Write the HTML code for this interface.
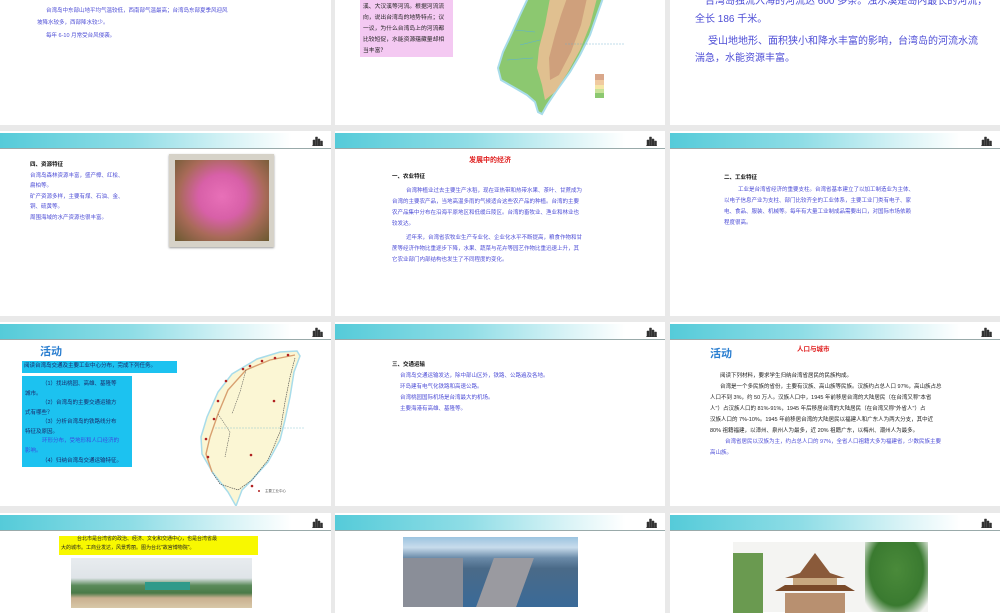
<!DOCTYPE html>
<html><head><meta charset="utf-8">
<style>
*{margin:0;padding:0;box-sizing:border-box}
body{width:1000px;height:600px;overflow:hidden;background:#e9e9e9;position:relative;font-family:"Liberation Sans","Noto Sans CJK SC",sans-serif}
.s{position:absolute;background:#fff;overflow:hidden}
.hd{position:absolute;left:0;right:0;top:2px;height:16px;background:linear-gradient(90deg,#55cbd9 0%,#8fdde6 40%,#d8f3f6 70%,#fff 88%);border-bottom:1px solid #9aa}
.ic{position:absolute;right:8px;top:3px;width:11px;height:10px}
.t{position:absolute;font-size:5.5px;line-height:11px;color:#4d4dd6;white-space:nowrap}
.b{color:#111;font-weight:bold}
.p{position:absolute}
</style></head><body>

<!-- row1 -->
<div class="s" style="left:0;top:-60px;width:331px;height:185px">
 <div class="t" style="left:38px;top:53px">年降水量多在 2000 毫米以上。</div>
 <div class="t" style="left:46px;top:66px">台湾岛中东部山地平均气温较低，西南部气温最高；台湾岛东部夏季风迎风</div>
 <div class="t" style="left:37px;top:78px">坡降水较多，西部降水较少。</div>
 <div class="t" style="left:46px;top:91px">每年 6-10 月常受台风侵袭。</div>
</div>
<div class="s" style="left:335px;top:-60px;width:330px;height:185px">
 <div class="p" style="left:25px;top:40px;width:93px;height:77px;background:#f4c9f2"></div>
 <div class="t" style="left:28px;top:62px;color:#222;font-size:5.8px">溪、大汉溪等河流。根据河流流</div>
 <div class="t" style="left:28px;top:73px;color:#222;font-size:5.8px">向，说出台湾岛的地势特点；议</div>
 <div class="t" style="left:28px;top:84px;color:#222;font-size:5.8px">一议，为什么台湾岛上的河流都</div>
 <div class="t" style="left:28px;top:95px;color:#222;font-size:5.8px">比较短促，水能资源蕴藏量却相</div>
 <div class="t" style="left:28px;top:106px;color:#222;font-size:5.8px">当丰富？</div>
 <svg class="p" style="left:0;top:0" width="330" height="185">
  <path d="M193 58 L268 58 L262 75 L255 95 L245 115 L235 132 L222 150 L212 165 L207 174 L203 172 L200 162 L192 155 L180 148 L166 140 L163 128 L168 112 L176 95 L185 75 Z" fill="#8cc870" stroke="#a8dcea" stroke-width="2"/>
  <path d="M215 58 L262 58 L255 85 L245 110 L233 132 L220 152 L210 160 L207 145 L202 128 L204 108 L210 85 Z" fill="#e0c090"/>
  <path d="M232 58 L252 58 L246 85 L236 112 L224 135 L215 140 L214 118 L220 95 L226 75 Z" fill="#cfa07c"/>
  <path d="M180 90 L200 92 M172 120 L198 118 M185 105 L205 100" stroke="#5ab0d8" stroke-width=".5" fill="none"/>
  <rect x="260" y="134" width="9" height="6" fill="#d9a78a"/><rect x="260" y="140" width="9" height="5" fill="#f0caa0"/><rect x="260" y="145" width="9" height="4" fill="#f5e6a6"/><rect x="260" y="149" width="9" height="4" fill="#c8e298"/><rect x="260" y="153" width="9" height="5" fill="#8cc870"/>
  <line x1="230" y1="104" x2="290" y2="104" stroke="#6ac" stroke-width=".4" stroke-dasharray="2 1"/>
 </svg>
</div>
<div class="s" style="left:670px;top:-60px;width:330px;height:185px">
 <div class="t" style="left:35px;top:55px;font-size:10px;line-height:14px">台湾岛独流入海的河流达 600 多条。浊水溪是岛内最长的河流，</div>
 <div class="t" style="left:25px;top:73px;font-size:10px;line-height:14px">全长 186 千米。</div>
 <div class="t" style="left:38px;top:95px;font-size:10px;line-height:14px">受山地地形、面积狭小和降水丰富的影响，台湾岛的河流水流</div>
 <div class="t" style="left:25px;top:112px;font-size:10px;line-height:14px">湍急，水能资源丰富。</div>
</div>

<!-- row2 -->
<div class="s" style="left:0;top:131px;width:331px;height:185px">
 <div class="hd"><svg class="ic" viewBox="0 0 11 10"><path d="M1 10V4h2v6M3.5 10V1h2v9M6 10V3h2v7M8.5 10V5h2v5M0 9.5h11" fill="#333" stroke="#333" stroke-width=".5"/></svg></div>
 <div class="t b" style="left:30px;top:29px">四、资源特征</div>
 <div class="t" style="left:30px;top:40px">台湾岛森林资源丰富，盛产樟、红桧、</div>
 <div class="t" style="left:30px;top:50px">扁柏等。</div>
 <div class="t" style="left:30px;top:61px">矿产资源多样，主要有煤、石油、金、</div>
 <div class="t" style="left:30px;top:71px">铜、硫黄等。</div>
 <div class="t" style="left:30px;top:82px">周围海域的水产资源也很丰富。</div>
 <div class="p" style="left:169px;top:23px;width:105px;height:93px;background:#d6d2c8;box-shadow:0 1px 2px #999"></div>
 <div class="p" style="left:175px;top:29px;width:94px;height:81px;background:radial-gradient(ellipse at 50% 45%,#e870b8 0%,#d860a8 35%,#a86a58 65%,#6a5a30 100%)"></div>
</div>
<div class="s" style="left:335px;top:131px;width:330px;height:185px">
 <div class="hd"><svg class="ic" viewBox="0 0 11 10"><path d="M1 10V4h2v6M3.5 10V1h2v9M6 10V3h2v7M8.5 10V5h2v5M0 9.5h11" fill="#333" stroke="#333" stroke-width=".5"/></svg></div>
 <div class="t" style="left:134px;top:24px;color:#e02020;font-weight:bold;font-size:7px">发展中的经济</div>
 <div class="t b" style="left:57px;top:41px">一、农业特征</div>
 <div class="t" style="left:71px;top:55px">台湾种植业过去主要生产水稻，现在亚热带和热带水果、茶叶、甘蔗成为</div>
 <div class="t" style="left:57px;top:66px">台湾的主要农产品，当地高温多雨的气候适合这些农产品的种植。台湾的主要</div>
 <div class="t" style="left:57px;top:77px">农产品集中分布在沿海平原地区和低缓丘陵区。台湾的畜牧业、渔业和林业也</div>
 <div class="t" style="left:57px;top:88px">较发达。</div>
 <div class="t" style="left:71px;top:102px">近年来，台湾省农牧业生产专业化、企业化水平不断提高，粮食作物和甘</div>
 <div class="t" style="left:57px;top:113px">蔗等经济作物比重逐步下降，水果、蔬菜与花卉等园艺作物比重迅速上升，其</div>
 <div class="t" style="left:57px;top:124px">它农业部门内部结构也发生了不同程度的变化。</div>
</div>
<div class="s" style="left:670px;top:131px;width:330px;height:185px">
 <div class="hd"><svg class="ic" viewBox="0 0 11 10"><path d="M1 10V4h2v6M3.5 10V1h2v9M6 10V3h2v7M8.5 10V5h2v5M0 9.5h11" fill="#333" stroke="#333" stroke-width=".5"/></svg></div>
 <div class="t b" style="left:54px;top:42px">二、工业特征</div>
 <div class="t" style="left:68px;top:54px">工业是台湾省经济的重要支柱。台湾省基本建立了以加工制造业为主体、</div>
 <div class="t" style="left:54px;top:65px">以电子信息产业为支柱、部门比较齐全的工业体系，主要工业门类有电子、家</div>
 <div class="t" style="left:54px;top:76px">电、食品、服装、机械等。每年有大量工业制成品需要出口，对国际市场依赖</div>
 <div class="t" style="left:54px;top:87px">程度很高。</div>
</div>

<!-- row3 -->
<div class="s" style="left:0;top:322px;width:331px;height:184px">
 <div class="hd"><svg class="ic" viewBox="0 0 11 10"><path d="M1 10V4h2v6M3.5 10V1h2v9M6 10V3h2v7M8.5 10V5h2v5M0 9.5h11" fill="#333" stroke="#333" stroke-width=".5"/></svg></div>
 <div class="t" style="left:40px;top:23px;font-size:11px;line-height:14px;color:#2a7ed0;font-weight:bold">活动</div>
 <div class="p" style="left:22px;top:39px;width:155px;height:12px;background:#1cc2f0"></div>
 <div class="t" style="left:24px;top:39px;color:#1a2a6a">阅读台湾岛交通及主要工业中心分布，完成下列任务。</div>
 <div class="p" style="left:22px;top:54px;width:110px;height:91px;background:#1cc2f0"></div>
 <div class="t" style="left:42px;top:57px;color:#1a2a6a">（1）找出桃园、高雄、基隆等</div>
 <div class="t" style="left:25px;top:67px;color:#1a2a6a">城市。</div>
 <div class="t" style="left:42px;top:76px;color:#1a2a6a">（2）台湾岛的主要交通运输方</div>
 <div class="t" style="left:25px;top:86px;color:#1a2a6a">式有哪些？</div>
 <div class="t" style="left:42px;top:95px;color:#1a2a6a">（3）分析台湾岛的铁路线分布</div>
 <div class="t" style="left:25px;top:105px;color:#1a2a6a">特征及原因。</div>
 <div class="t" style="left:42px;top:114px;color:#3a4ae0">环形分布，受地形和人口经济的</div>
 <div class="t" style="left:25px;top:124px;color:#3a4ae0">影响。</div>
 <div class="t" style="left:42px;top:134px;color:#1a2a6a">（4）归纳台湾岛交通运输特征。</div>
 <svg class="p" style="left:0;top:0" width="331" height="184">
  <path d="M297 29 L300 34 L294 50 L290 75 L285 98 L280 118 L268 140 L250 160 L242 168 L236 184 L228 170 L213 151 L202 132 L201 115 L207 95 L218 70 L232 52 L257 37 L280 30 Z" fill="#fbf6d4" stroke="#a8dcea" stroke-width="1.5"/>
  <path d="M295 33 L270 38 L246 48 L228 68 L218 92 L210 115 L206 132 L212 150" fill="none" stroke="#d8a070" stroke-width="1.4"/>
  <path d="M295 36 L290 55 L285 80 L280 110 L268 138 L252 158 L238 168 L220 162 L212 150" fill="none" stroke="#444" stroke-width=".6" stroke-dasharray="1.5 .8"/>
  <path d="M218 92 L230 110 L225 135 M246 48 L240 70 L232 92" fill="none" stroke="#444" stroke-width=".5" stroke-dasharray="1.5 .8"/>
  <g fill="#b02020"><circle cx="288" cy="33" r="1.3"/><circle cx="275" cy="36" r="1.3"/><circle cx="262" cy="39" r="1.3"/><circle cx="250" cy="44" r="1.3"/><circle cx="243" cy="47" r="1.3"/><circle cx="226" cy="59" r="1.3"/><circle cx="218" cy="79" r="1.3"/><circle cx="214" cy="97" r="1.3"/><circle cx="206" cy="117" r="1.3"/><circle cx="208" cy="135" r="1.3"/><circle cx="252" cy="164" r="1.3"/><circle cx="251" cy="133" r="1.3"/><circle cx="274" cy="79" r="1.3"/></g>
  <line x1="215" y1="106" x2="305" y2="106" stroke="#7bc" stroke-width=".4" stroke-dasharray="2 1"/>
  <circle cx="259" cy="169" r="1" fill="#b02020"/>
  <text x="265" y="170" font-size="3.5" fill="#555" font-family="Noto Sans CJK SC">主要工业中心</text>
 </svg>
</div>
<div class="s" style="left:335px;top:322px;width:330px;height:184px">
 <div class="hd"><svg class="ic" viewBox="0 0 11 10"><path d="M1 10V4h2v6M3.5 10V1h2v9M6 10V3h2v7M8.5 10V5h2v5M0 9.5h11" fill="#333" stroke="#333" stroke-width=".5"/></svg></div>
 <div class="t b" style="left:57px;top:38px">三、交通运输</div>
 <div class="t" style="left:65px;top:49px">台湾岛交通运输发达，除中部山区外，铁路、公路遍及各地。</div>
 <div class="t" style="left:65px;top:60px">环岛建有电气化铁路和高速公路。</div>
 <div class="t" style="left:65px;top:71px">台湾桃园国际机场是台湾最大的机场。</div>
 <div class="t" style="left:65px;top:82px">主要海港有高雄、基隆等。</div>
</div>
<div class="s" style="left:670px;top:322px;width:330px;height:184px">
 <div class="hd"><svg class="ic" viewBox="0 0 11 10"><path d="M1 10V4h2v6M3.5 10V1h2v9M6 10V3h2v7M8.5 10V5h2v5M0 9.5h11" fill="#333" stroke="#333" stroke-width=".5"/></svg></div>
 <div class="t" style="left:40px;top:25px;font-size:11px;line-height:14px;color:#2a7ed0;font-weight:bold">活动</div>
 <div class="t" style="left:127px;top:22px;color:#e02020;font-weight:bold;font-size:6.5px">人口与城市</div>
 <div class="t" style="left:50px;top:49px;color:#222">阅读下列材料，要求学生归纳台湾省居民的民族构成。</div>
 <div class="t" style="left:50px;top:60px;color:#222">台湾是一个多民族的省份，主要有汉族、高山族等民族。汉族约占总人口 97%，高山族占总</div>
 <div class="t" style="left:40px;top:71px;color:#222">人口不到 3%，约 50 万人。汉族人口中，1945 年前移居台湾的大陆居民（在台湾又称"本省</div>
 <div class="t" style="left:40px;top:82px;color:#222">人"）占汉族人口的 81%-91%，1945 年后移居台湾的大陆居民（在台湾又称"外省人"）占</div>
 <div class="t" style="left:40px;top:93px;color:#222">汉族人口的 7%-10%。1945 年前移居台湾的大陆居民以福建人和广东人为两大分支，其中近</div>
 <div class="t" style="left:40px;top:104px;color:#222">80% 祖籍福建，以漳州、泉州人为最多，近 20% 祖籍广东，以梅州、潮州人为最多。</div>
 <div class="t" style="left:55px;top:115px">台湾省居民以汉族为主，约占总人口的 97%，全省人口祖籍大多为福建省，少数民族主要</div>
 <div class="t" style="left:40px;top:126px">高山族。</div>
</div>

<!-- row4 -->
<div class="s" style="left:0;top:513px;width:331px;height:100px">
 <div class="hd"><svg class="ic" viewBox="0 0 11 10"><path d="M1 10V4h2v6M3.5 10V1h2v9M6 10V3h2v7M8.5 10V5h2v5M0 9.5h11" fill="#333" stroke="#333" stroke-width=".5"/></svg></div>
 <div class="p" style="left:59px;top:23px;width:199px;height:19px;background:#f8f800"></div>
 <div class="t" style="left:77px;top:21px;color:#222;font-size:5px;line-height:10px">台北市是台湾省的政治、经济、文化和交通中心，也是台湾省最</div>
 <div class="t" style="left:61px;top:30px;color:#222;font-size:5px;line-height:10px">大的城市。工商业发达，风景秀丽。图为台北"故宫博物院"。</div>
 <div class="p" style="left:71px;top:45px;width:181px;height:50px;background:linear-gradient(180deg,#e8ecef 0%,#dfe4e8 40%,#5a8a5a 55%,#4a7a48 70%,#c9b090 80%,#d8c8a8 100%)"></div>
 <div class="p" style="left:145px;top:69px;width:45px;height:8px;background:#2f9a8a"></div>
</div>
<div class="s" style="left:335px;top:513px;width:330px;height:100px">
 <div class="hd"><svg class="ic" viewBox="0 0 11 10"><path d="M1 10V4h2v6M3.5 10V1h2v9M6 10V3h2v7M8.5 10V5h2v5M0 9.5h11" fill="#333" stroke="#333" stroke-width=".5"/></svg></div>
 <div class="p" style="left:68px;top:24px;width:175px;height:70px;background:linear-gradient(180deg,#9cc4e0 0%,#c8dcec 15%,#6a8aa8 30%,#4a6a88 45%,#3a6a98 100%)"></div>
 <div class="p" style="left:68px;top:45px;width:60px;height:49px;background:#8a8e98"></div>
 <div class="p" style="left:150px;top:45px;width:40px;height:49px;background:#9a9aa0;transform:skewX(-20deg)"></div>
</div>
<div class="s" style="left:670px;top:513px;width:330px;height:100px">
 <div class="hd"><svg class="ic" viewBox="0 0 11 10"><path d="M1 10V4h2v6M3.5 10V1h2v9M6 10V3h2v7M8.5 10V5h2v5M0 9.5h11" fill="#333" stroke="#333" stroke-width=".5"/></svg></div>
 <div class="p" style="left:63px;top:29px;width:195px;height:70px;background:#f4f4f2"></div>
 <div class="p" style="left:63px;top:40px;width:30px;height:60px;background:#6a9a50"></div>
 <div class="p" style="left:195px;top:29px;width:63px;height:70px;background:radial-gradient(ellipse at 50% 40%,#4a8a3a,#3a7a30 60%,#f4f4f2 90%)"></div>
 <svg class="p" style="left:95px;top:40px" width="110" height="60"><path d="M50 0 L35 20 L20 25 L80 25 L65 20 Z" fill="#8a5a3a"/><rect x="28" y="25" width="44" height="12" fill="#c8a880"/><path d="M10 38 L90 38 L80 32 L20 32Z" fill="#7a4a2a"/><rect x="20" y="40" width="60" height="20" fill="#b89070"/></svg>
</div>
</body></html>
